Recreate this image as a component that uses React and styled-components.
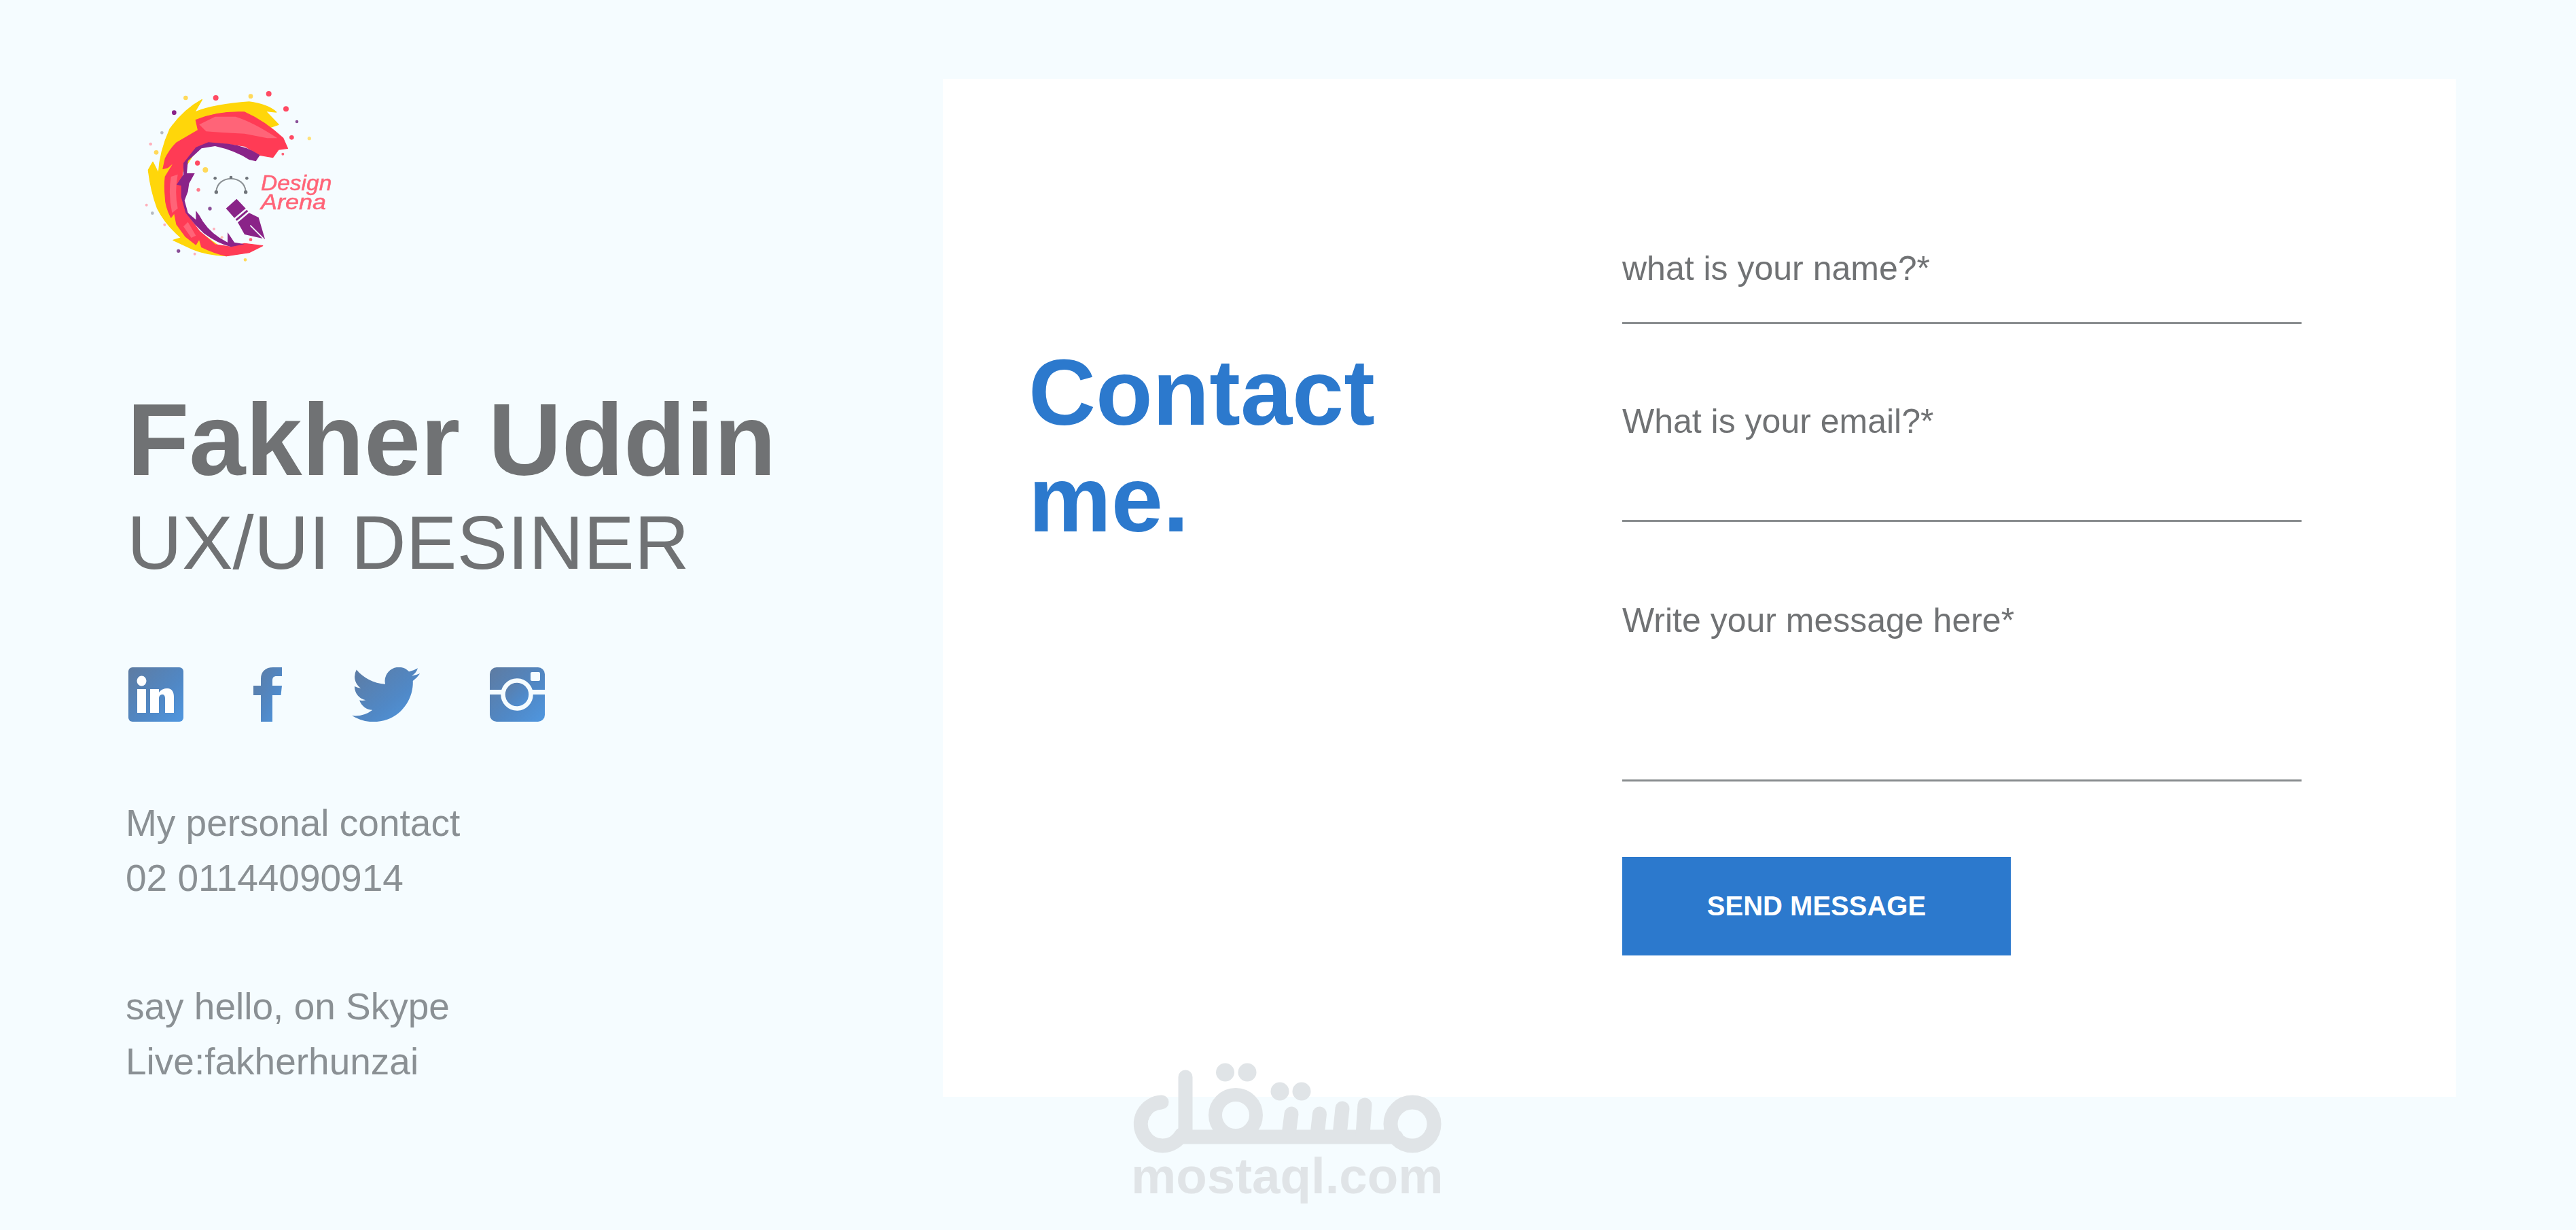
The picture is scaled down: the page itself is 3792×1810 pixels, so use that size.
import styled, { createGlobalStyle } from 'styled-components'

const GlobalStyle = createGlobalStyle`
  html, body {
    margin: 0;
    padding: 0;
    background: #f5fcff;
    font-family: "Liberation Sans", Arial, sans-serif;
  }
`

const Page = styled.div`
  position: relative;
  display: flex;
  width: 3792px;
  height: 1810px;
  overflow: hidden;
  background: #f5fcff;
`

const Sidebar = styled.aside`
  width: 1388px;
  box-sizing: border-box;
  padding: 100px 0 0 185px;
`

const LogoMark = styled.svg`
  display: block;
  width: 400px;
  height: 320px;
  margin-left: -25px;
  filter: blur(0.5px);
`

const Name = styled.h1`
  margin: 153px 0 0 2px;
  font-size: 149.5px;
  line-height: 150px;
  font-weight: 700;
  color: #707274;
`

const Role = styled.h2`
  margin: 20px 0 0 2px;
  font-size: 112px;
  line-height: 112px;
  font-weight: 400;
  color: #707274;
`

const Socials = styled.div`
  display: flex;
  align-items: center;
  gap: 103px;
  margin: 127px 0 0 4px;
`

const SocialIcon = styled.svg`
  display: block;
  width: ${p => p.$w}px;
  height: 80px;
`

const ContactBlock = styled.p`
  margin: ${p => p.$top}px 0 0;
  font-size: 55px;
  line-height: 81px;
  color: #8a9094;
`

const Card = styled.main`
  display: flex;
  width: 2227px;
  height: 1498px;
  margin-top: 116px;
  background: #fff;
`

const HeadingColumn = styled.div`
  width: 1000px;
  box-sizing: border-box;
  padding: 383px 0 0 126px;
`

const Heading = styled.h2`
  margin: 0;
  font-size: 137px;
  line-height: 157px;
  font-weight: 700;
  color: #2c79cd;
`

const Form = styled.form`
  width: 1000px;
  padding-top: 250px;
`

const Field = styled.div`
  margin-top: ${p => p.$top}px;
  padding-bottom: ${p => p.$space}px;
  border-bottom: 3px solid #888c8e;
`

const Label = styled.label`
  display: block;
  font-size: 50px;
  line-height: 58px;
  color: #707274;
`

const SendButton = styled.button`
  display: block;
  width: 572px;
  height: 145px;
  margin-top: 111px;
  padding: 0;
  border: none;
  background: #2c79cd;
  color: #fff;
  font-family: inherit;
  font-size: 40px;
  font-weight: 700;
  cursor: pointer;
`

const Watermark = styled.div`
  position: absolute;
  left: 1660px;
  top: 1560px;
  width: 465px;
  color: #e0e4e7;
`

const WatermarkLogo = styled.svg`
  display: block;
  width: 465px;
  height: 140px;
`

const WatermarkText = styled.div`
  margin: -12px 0 0 5px;
  font-size: 74.500px;
  line-height: 85px;
  font-weight: 700;
  white-space: nowrap;
`

const IconGradient = ({ id }) => (
  <defs>
    <linearGradient id={id} x1="0" y1="0" x2="1" y2="1">
      <stop offset="0" stopColor="#5e7ba1" />
      <stop offset="0.6" stopColor="#5088c6" />
      <stop offset="1" stopColor="#4f97e0" />
    </linearGradient>
  </defs>
)

const Linkedin = () => (
  <SocialIcon $w={81} viewBox="0 0 81 80">
    <IconGradient id="grad-in" />
    <rect width="81" height="80" rx="6" fill="url(#grad-in)" />
    <ellipse cx="19.5" cy="20" rx="7" ry="7.5" fill="#fff" />
    <rect x="13" y="32" width="13" height="35" fill="#fff" />
    <path d="M32 32H45V37C48 33 52 31 57 31C64 31 67 36 67 44V67H54V46C54 41 52 40 50 40C47 40 45 42 45 46V67H32Z" fill="#fff" />
  </SocialIcon>
)

const Facebook = () => (
  <SocialIcon $w={42} viewBox="0 0 42 80">
    <IconGradient id="grad-fb" />
    <path d="M11 80V41H0V27H11V17C11 6 18 0 29 0H42V13H34C30 13 28 15 28 19V27H42L40.5 41H28V80Z" fill="url(#grad-fb)" />
  </SocialIcon>
)

const Twitter = () => (
  <SocialIcon $w={100} viewBox="0 2.3 24 19.4" preserveAspectRatio="none">
    <IconGradient id="grad-tw" />
    <path
      d="M23.953 4.57a10 10 0 01-2.825.775 4.958 4.958 0 002.163-2.723c-.951.555-2.005.959-3.127 1.184a4.92 4.92 0 00-8.384 4.482C7.69 8.095 4.067 6.13 1.64 3.162a4.822 4.822 0 00-.666 2.475c0 1.71.87 3.213 2.188 4.096a4.904 4.904 0 01-2.228-.616v.06a4.923 4.923 0 003.946 4.827 4.996 4.996 0 01-2.212.085 4.936 4.936 0 004.604 3.417 9.867 9.867 0 01-6.102 2.105c-.39 0-.779-.023-1.17-.067a13.995 13.995 0 007.557 2.209c9.053 0 13.998-7.496 13.998-13.985 0-.21 0-.42-.015-.63A9.935 9.935 0 0024 4.59z"
      fill="url(#grad-tw)"
    />
  </SocialIcon>
)

const Instagram = () => (
  <SocialIcon $w={81} viewBox="0 0 81 80">
    <IconGradient id="grad-ig" />
    <rect width="81" height="80" rx="10" fill="url(#grad-ig)" />
    <rect y="33" width="81" height="7" fill="#f5fcff" />
    <circle cx="40" cy="40" r="20.5" fill="url(#grad-ig)" stroke="#f5fcff" strokeWidth="6.5" />
    <rect x="60" y="7" width="14" height="13" rx="2" fill="#f5fcff" />
  </SocialIcon>
)

const logoDots = [
  [340, 132, 10, '#ffd95a'], [473, 132, 12, '#ff4a63'], [627, 125, 10, '#ffd95a'], [707, 114, 12, '#ff4a63'],
  [783, 181, 12, '#ff4a63'], [289, 197, 10, '#8a2388'], [831, 237, 7, '#8a4f98'], [808, 307, 10, '#ff4a63'],
  [886, 311, 8, '#ffe27a'], [235, 286, 7, '#b5b9c0'], [185, 336, 7, '#ffb0bb'], [210, 373, 10, '#ffd95a'],
  [769, 380, 6, '#ff6478'], [392, 420, 11, '#ff4a63'], [427, 450, 12, '#ffd95a'], [396, 538, 8, '#ff7a8b'],
  [447, 621, 8, '#8a4f98'], [167, 605, 6, '#ffb0bb'], [193, 641, 7, '#b5b9c0'], [247, 692, 6, '#ffb0bb'],
  [465, 711, 6, '#ffb0bb'], [500, 748, 6, '#ffc0b0'], [627, 758, 7, '#ff6478'], [308, 808, 8, '#8a4f98'],
  [380, 821, 6, '#ffb0bb'], [603, 847, 7, '#ffd95a'],
]

const Logo = () => (
  <LogoMark viewBox="0 0 1200 960">
    <g strokeLinejoin="round">
      <path
        d="M412 140L380 195Q470 160 620 150Q700 160 740 195L692 190L750 250L600 300L400 340L300 500L340 680L520 810L600 810L520 830Q430 825 370 800L285 760L320 750Q250 690 215 620Q185 540 175 450L195 415L220 465Q225 370 270 270Q330 185 412 140Z"
        fill="#ffd60a"
        stroke="#ffd60a"
        strokeWidth="4"
      />
      <path
        d="M385 230Q480 190 600 195Q690 235 770 310L790 355L750 360L725 395L668 385L600 345L530 335L440 328L385 350L330 420L320 520L320 570L340 640L400 720L470 780L540 790L600 775L680 785L620 815L520 830Q460 815 410 790L400 755L385 780L340 745L300 690L290 640L275 660Q250 610 250 570Q245 520 250 480L290 415L260 440L240 445L250 400Q270 360 300 330L395 275Z"
        fill="#ff3b55"
        stroke="#ff3b55"
        strokeWidth="4"
      />
    </g>
    <path d="M400 250L470 215L560 215Q640 240 745 310L700 310L600 290L500 285L430 280Z" fill="#ff6478" />
    <path d="M275 480Q262 560 280 640L305 620Q290 550 305 470Z" fill="#ff6478" />
    <path d="M330 700L350 680L385 740L365 750Z" fill="#ff6478" />
    <path
      d="M385 350L440 328L530 335Q610 345 668 385L650 412L620 405Q560 365 470 345L410 355L350 410L345 465L380 465L355 510L350 545L335 585L350 640L385 670L385 630L400 650Q430 710 490 750L525 770L525 725L555 770L600 778L540 790Q480 775 420 730L380 690L340 640L320 570L320 520L300 515L330 470L330 420Z"
      fill="#8a2388"
    />
    <path d="M475 545C480 470 600 470 605 545" fill="none" stroke="#8a9094" strokeWidth="6" />
    <circle cx="470" cy="487" r="7" fill="#6f747a" />
    <circle cx="540" cy="483" r="7" fill="#6f747a" />
    <circle cx="610" cy="487" r="7" fill="#6f747a" />
    <circle cx="475" cy="548" r="8" fill="#6f747a" />
    <circle cx="605" cy="548" r="8" fill="#6f747a" />
    <path d="M565 578L518 620L555 662L605 620Z" fill="#8a2388" />
    <path d="M560 668L610 626L616 633L566 675Z" fill="#8a2388" />
    <path d="M570 682L620 640L662 660L690 755L600 735Z" fill="#8a2388" />
    <path d="M625 695L685 755" stroke="#f5fcff" strokeWidth="5" />
    {logoDots.map(([cx, cy, r, fill]) => (
      <circle key={`${cx}-${cy}`} cx={cx} cy={cy} r={r} fill={fill} />
    ))}
    <g fill="#ff6478" stroke="#ff6478" strokeWidth="1.500" fontFamily="'Liberation Sans', sans-serif" fontStyle="italic" fontSize="96">
      <text x="672" y="540" textLength="313" lengthAdjust="spacingAndGlyphs">Design</text>
      <text x="672" y="625" textLength="288" lengthAdjust="spacingAndGlyphs">Arena</text>
    </g>
  </LogoMark>
)

const MostaqlLogo = () => (
  <WatermarkLogo viewBox="0 0 465 140">
    <g fill="none" stroke="currentColor" strokeWidth="21" strokeLinecap="round">
      <ellipse cx="419" cy="94" rx="32" ry="32" />
      <ellipse cx="159" cy="81" rx="30" ry="30" strokeWidth="20" />
      <path d="M50 62A32 32 0 1 0 79 110" />
      <path d="M85 25V113H395" />
      <path d="M349 66L346 110M316 71L312 110M282.500 79L279 110M241 79L237 110" />
    </g>
    <g fill="currentColor">
      <circle cx="224" cy="46" r="13.500" />
      <circle cx="256" cy="46" r="13.500" />
      <circle cx="143.500" cy="18" r="13.500" />
      <circle cx="176" cy="18" r="13.500" />
    </g>
  </WatermarkLogo>
)

const App = () => {
  return (
    <Page>
      <GlobalStyle />
      <Sidebar>
        <Logo />
        <Name>Fakher Uddin</Name>
        <Role>UX/UI DESINER</Role>
        <Socials>
          <Linkedin />
          <Facebook />
          <Twitter />
          <Instagram />
        </Socials>
        <ContactBlock $top={109}>
          My personal contact
          <br />
          02 01144090914
        </ContactBlock>
        <ContactBlock $top={108}>
          say hello, on Skype
          <br />
          Live:fakherhunzai
        </ContactBlock>
      </Sidebar>
      <Card>
        <HeadingColumn>
          <Heading>
            Contact
            <br />
            me.
          </Heading>
        </HeadingColumn>
        <Form>
          <Field $top={0} $space={50}>
            <Label>what is your name?*</Label>
          </Field>
          <Field $top={114} $space={116}>
            <Label>What is your email?*</Label>
          </Field>
          <Field $top={116} $space={205}>
            <Label>Write your message here*</Label>
          </Field>
          <SendButton type="button">SEND MESSAGE</SendButton>
        </Form>
      </Card>
      <Watermark>
        <MostaqlLogo />
        <WatermarkText>mostaql.com</WatermarkText>
      </Watermark>
    </Page>
  )
}

export default App
